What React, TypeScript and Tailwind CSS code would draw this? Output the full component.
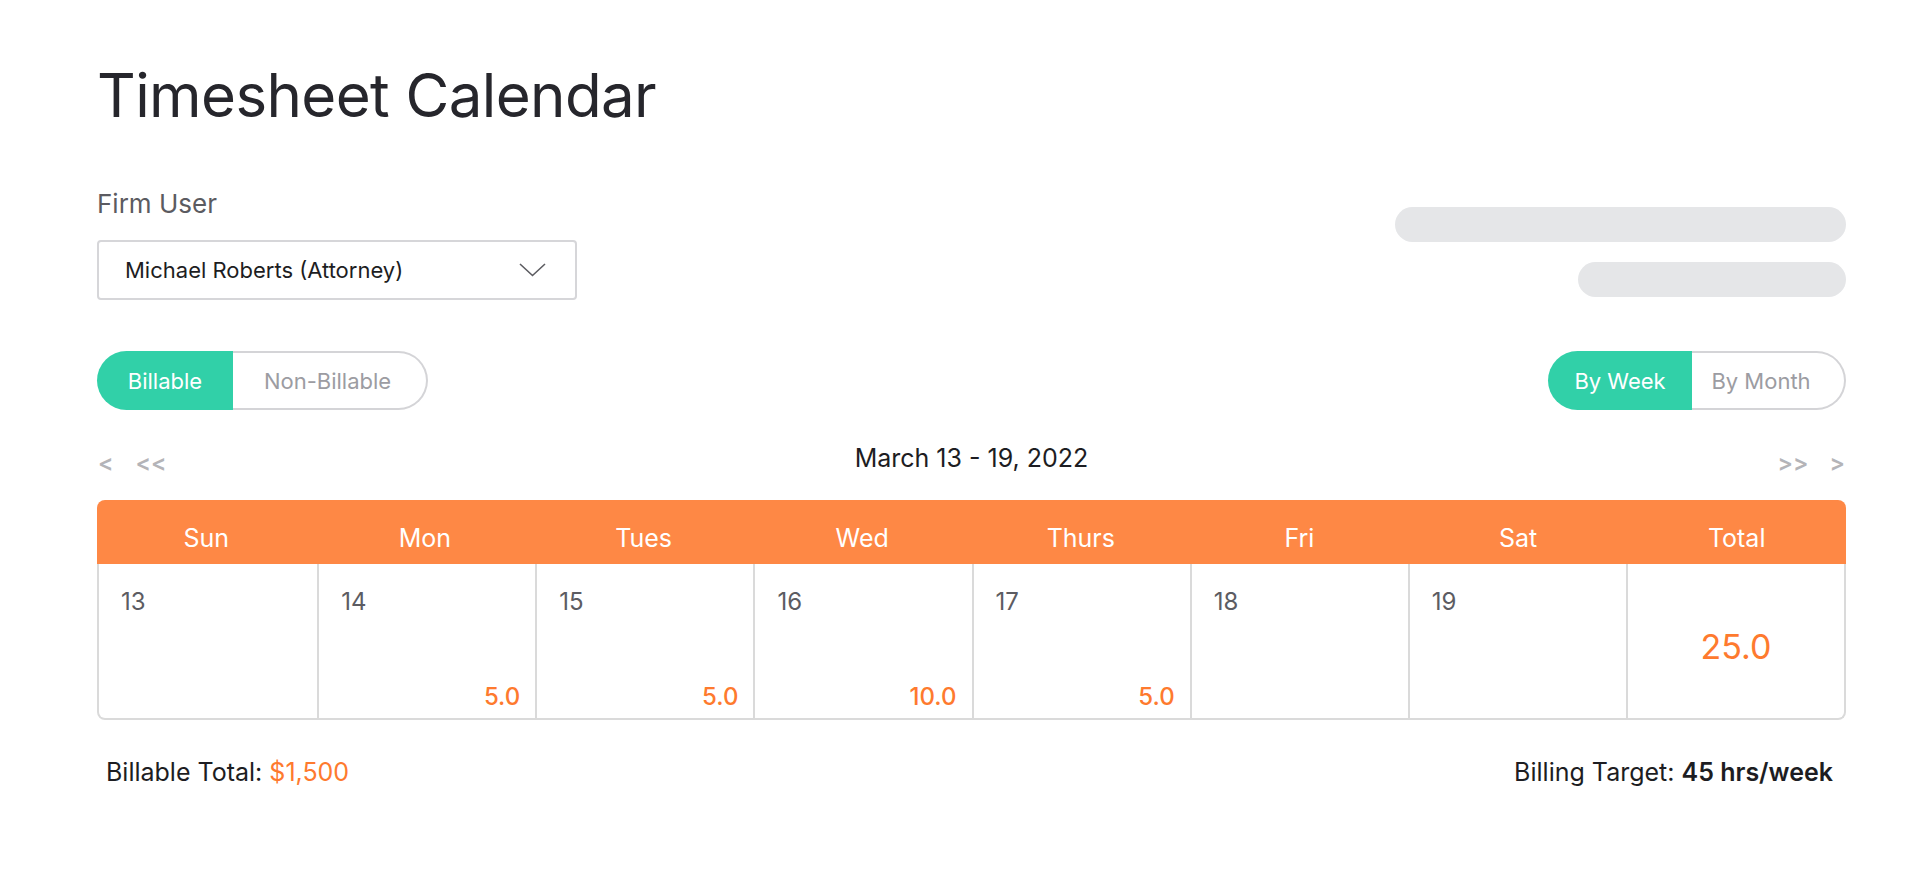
import { useState } from 'react';

const days = [
  { name: 'Sun', date: 13, hours: '' },
  { name: 'Mon', date: 14, hours: '5.0' },
  { name: 'Tues', date: 15, hours: '5.0' },
  { name: 'Wed', date: 16, hours: '10.0' },
  { name: 'Thurs', date: 17, hours: '5.0' },
  { name: 'Fri', date: 18, hours: '' },
  { name: 'Sat', date: 19, hours: '' },
];

function Chevron() {
  return (
    <svg width="27" height="14" viewBox="0 0 27 14" fill="none">
      <path d="M1 1L13.5 12.5L26 1" stroke="#5c5c61" strokeWidth="1.6" />
    </svg>
  );
}

function Toggle({
  options,
  widths,
  active,
  onChange,
}: {
  options: string[];
  widths: string[];
  active: number;
  onChange: (i: number) => void;
}) {
  return (
    <div className="flex h-[59px]">
      {options.map((opt, i) => (
        <button
          key={opt}
          onClick={() => onChange(i)}
          className={`${widths[i]} flex items-center justify-center text-[22px] leading-none ${
            i === 0 ? 'rounded-l-full' : 'rounded-r-full'
          } ${
            active === i
              ? 'bg-[#31d0a8] text-white'
              : `border-y-2 border-[#d4d4d7] text-[#9c9ca2] ${i === 0 ? 'border-l-2' : 'border-r-2'}`
          }`}
        >
          {opt}
        </button>
      ))}
    </div>
  );
}

export default function App() {
  const [billable, setBillable] = useState(0);
  const [range, setRange] = useState(0);

  return (
    <div className="min-h-screen bg-white font-['Inter',sans-serif]">
      <div className="ml-[97px] w-[1749px] pt-[65px]">
        {/* Title */}
        <h1 className="text-[60px] leading-none text-[#26262c] tracking-[-0.01em]">Timesheet Calendar</h1>

        {/* Firm user + placeholders */}
        <div className="mt-[66px] flex items-start justify-between">
          <div>
            <div className="text-[26px] leading-none text-[#5b5b61]">Firm User</div>
            <button className="mt-[23px] flex h-[60px] w-[480px] items-center justify-between rounded-[4px] border-2 border-[#d6d6d9] pl-[26px] pr-[29px] text-[22px] leading-none text-[#1d1d22]">
              <span>Michael Roberts (Attorney)</span>
              <Chevron />
            </button>
          </div>
          <div className="flex flex-col items-end gap-[20px] pt-[16px]">
            <div className="h-[35px] w-[451px] rounded-full bg-[#e5e6e8]" />
            <div className="h-[35px] w-[268px] rounded-full bg-[#e5e6e8]" />
          </div>
        </div>

        {/* Toggles */}
        <div className="mt-[51px] flex items-center justify-between">
          <Toggle
            options={['Billable', 'Non-Billable']}
            widths={['w-[136px]', 'w-[195px] pr-[4px]']}
            active={billable}
            onChange={setBillable}
          />
          <Toggle
            options={['By Week', 'By Month']}
            widths={['w-[144px]', 'w-[154px] pr-[14px]']}
            active={range}
            onChange={setRange}
          />
        </div>

        {/* Week navigation */}
        <div className="mt-[36px] grid h-[25px] grid-cols-3 items-start">
          <div className="flex items-center gap-[22px] pl-[1px] pt-[6px] text-[23px] font-semibold leading-none text-[#b4b4b8]">
            <button>&lt;</button>
            <button>&lt;&lt;</button>
          </div>
          <div className="text-center text-[25px] leading-none text-[#1d1d22]">March 13 - 19, 2022</div>
          <div className="flex items-center justify-end gap-[21px] pr-[1px] pt-[6px] text-[23px] font-semibold leading-none text-[#b4b4b8]">
            <button>&gt;&gt;</button>
            <button>&gt;</button>
          </div>
        </div>

        {/* Calendar */}
        <div className="mt-[29px]">
          <div className="grid h-[64px] grid-cols-8 rounded-t-[8px] bg-[#fe8845]">
            {days.map((d) => (
              <div key={d.name} className="flex items-center justify-center pt-[13px] text-[25px] leading-none text-white">
                {d.name}
              </div>
            ))}
            <div className="flex items-center justify-center pt-[13px] text-[25px] leading-none text-white">Total</div>
          </div>
          <div className="grid h-[156px] grid-cols-8 rounded-b-[8px] border-x-2 border-b-2 border-[#dadada]">
            {days.map((d, i) => (
              <div
                key={d.date}
                className={`flex flex-col justify-between pb-[9px] pl-[22px] pr-[15px] pt-[26px] ${
                  i > 0 ? 'border-l-2 border-[#dadada]' : ''
                }`}
              >
                <span className="text-[24px] leading-none text-[#5c5c62]">{d.date}</span>
                <span className="text-right text-[24px] font-medium leading-none text-[#fe7a2e]">{d.hours}</span>
              </div>
            ))}
            <div className="flex items-center justify-center border-l-2 border-[#dadada] pt-[11px] text-[34px] leading-none text-[#fe7a2e]">
              25.0
            </div>
          </div>
        </div>

        {/* Footer */}
        <div className="mt-[40px] flex items-center justify-between pl-[9px] pr-[13px] text-[25px] leading-none text-[#1d1d22]">
          <div>
            Billable Total: <span className="text-[#fe7a2e]">$1,500</span>
          </div>
          <div>
            Billing Target: <span className="font-semibold">45 hrs/week</span>
          </div>
        </div>
      </div>
    </div>
  );
}
